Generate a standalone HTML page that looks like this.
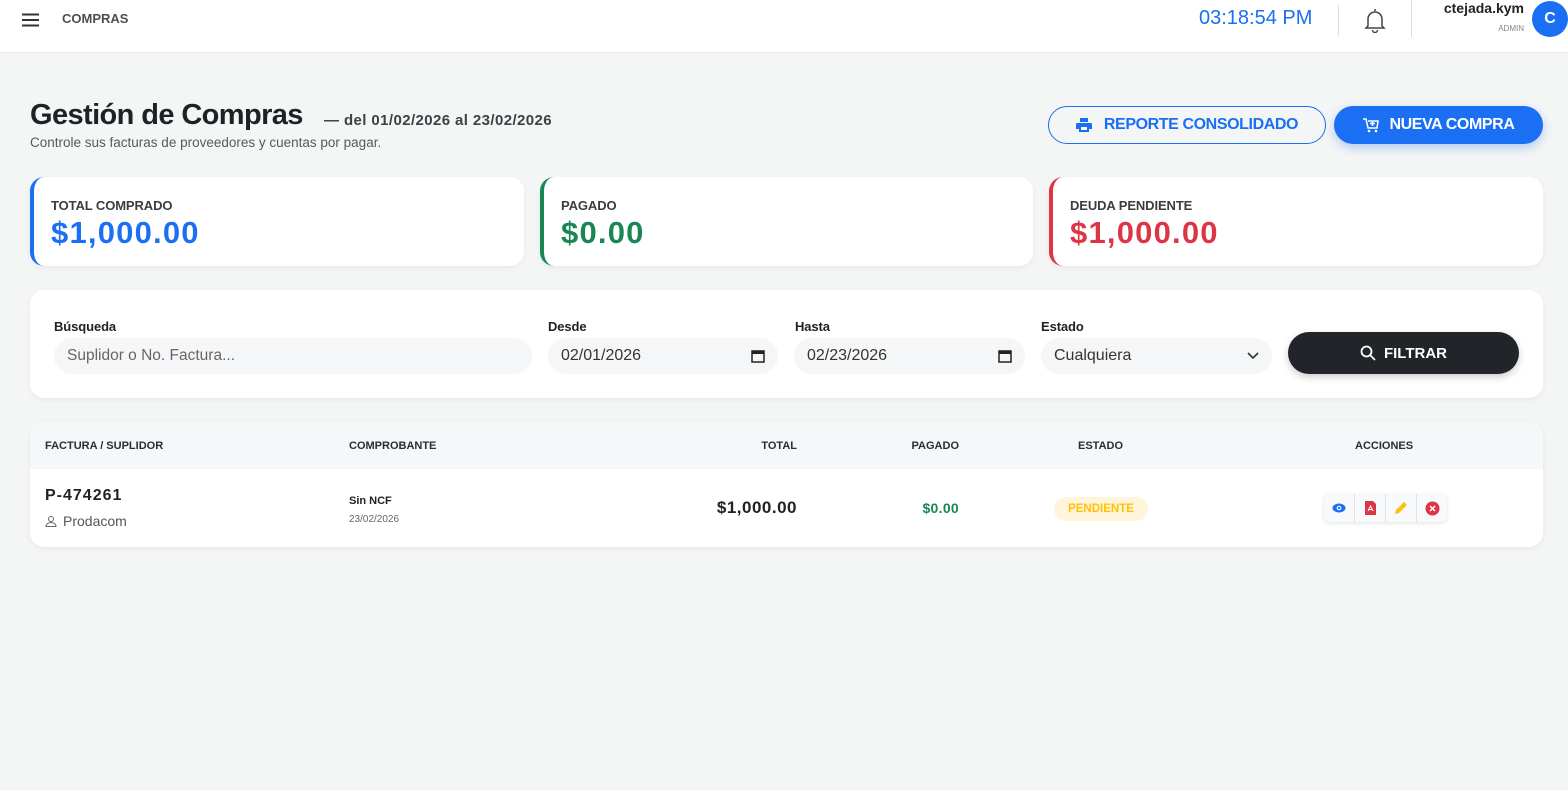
<!DOCTYPE html>
<html><head><meta charset="utf-8"><style>
*{box-sizing:border-box;margin:0;padding:0}
body{width:1568px;height:790px;background:#f4f5f5;font-family:"Liberation Sans",sans-serif;position:relative;overflow:hidden;color:#212529}
.abs{position:absolute}
.hdr{left:0;top:0;width:1568px;height:53px;background:#fff;border-bottom:1px solid #e8e9eb}
.card{background:#fff;border-radius:14px;box-shadow:0 2px 6px rgba(0,0,0,.05)}
.lbl{font-size:13px;font-weight:bold;color:#3a3d42;letter-spacing:-.1px}
.inp{background:#f5f6f8;border-radius:18px;height:36px;font-size:16px;color:#333;padding:0 13px;display:flex;align-items:center}
.th{font-size:11px;font-weight:bold;color:#2a2d31;top:440px;letter-spacing:0}
.val{font-size:31px;font-weight:bold;letter-spacing:1.2px;top:215px}
</style></head><body>
<div class="abs hdr"></div>
<svg class="abs" style="left:22px;top:13px" width="17" height="14"><path d="M0 1.5h17M0 7h17M0 12.5h17" stroke="#333" stroke-width="2"/></svg>
<div class="abs" style="left:62px;top:11px;font-size:13px;font-weight:bold;color:#4b4f55">COMPRAS</div>
<div class="abs" style="left:1199px;top:7px;font-size:20px;color:#1a6ff2">03:18:54 PM</div>
<div class="abs" style="left:1338px;top:5px;width:1px;height:31px;background:#ddd"></div>
<svg class="abs" style="left:1364px;top:7px" width="22" height="26" viewBox="0 0 22 26"><path d="M11 2v2M4 19V12a7 7 0 0 1 14 0v7l2 2H2z M8.5 23a2.5 2.5 0 0 0 5 0" fill="none" stroke="#444" stroke-width="1.5"/></svg>
<div class="abs" style="left:1411px;top:0;width:1px;height:37px;background:#ddd"></div>
<div class="abs" style="right:44px;top:0px;font-size:14px;font-weight:bold;color:#222">ctejada.kym</div>
<div class="abs" style="right:44px;top:24px;font-size:8px;color:#888">ADMIN</div>
<div class="abs" style="left:1532px;top:1px;width:36px;height:36px;border-radius:50%;background:#1a6ff2;color:#fff;font-weight:bold;font-size:16px;display:flex;align-items:center;justify-content:center">C</div>

<div class="abs" style="left:30px;top:99px;font-size:29px;font-weight:bold;color:#1e2125;letter-spacing:-.6px">Gestión de Compras</div>
<div class="abs" style="left:324px;top:112px;font-size:15px;font-weight:bold;color:#3e4247;letter-spacing:.4px">— del 01/02/2026 al 23/02/2026</div>
<div class="abs" style="left:30px;top:135px;font-size:13.5px;color:#555a60">Controle sus facturas de proveedores y cuentas por pagar.</div>

<div class="abs" style="left:1048px;top:106px;width:278px;height:38px;border:1.5px solid #1a6ff2;border-radius:19px;display:flex;align-items:center;justify-content:center;color:#1a6ff2;font-weight:bold;font-size:16px;letter-spacing:-.4px">
<svg width="16" height="14" viewBox="0 0 16 14" style="margin-right:12px"><path d="M4 0h8v4H4z M1 5h14a1 1 0 0 1 1 1v5h-3v3H3v-3H0V6a1 1 0 0 1 1-1z" fill="#1a6ff2"/><rect x="5" y="9" width="6" height="3" fill="#fff"/></svg>REPORTE CONSOLIDADO</div>
<div class="abs" style="left:1334px;top:106px;width:209px;height:38px;background:#1a6ff2;border-radius:19px;display:flex;align-items:center;justify-content:center;color:#fff;font-weight:bold;font-size:16px;letter-spacing:-.4px;box-shadow:0 4px 10px rgba(26,111,242,.3)">
<svg width="16" height="16" viewBox="0 0 16 16" style="margin-right:11px"><path d="M0 2h3l2 9h9l1-7H5M7 6.5h5M9.5 4v5" fill="none" stroke="#fff" stroke-width="1.5"/><circle cx="6" cy="14" r="1.3" fill="#fff"/><circle cx="13" cy="14" r="1.3" fill="#fff"/></svg>NUEVA COMPRA</div>

<div class="abs card" style="left:30px;top:177px;width:494px;height:89px;border-left:4px solid #1a6ff2"></div>
<div class="abs card" style="left:540px;top:177px;width:493px;height:89px;border-left:4px solid #198754"></div>
<div class="abs card" style="left:1049px;top:177px;width:494px;height:89px;border-left:4px solid #dc3545"></div>
<div class="abs lbl" style="left:51px;top:198px">TOTAL COMPRADO</div>
<div class="abs val" style="left:51px;color:#1a6ff2">$1,000.00</div>
<div class="abs lbl" style="left:561px;top:198px">PAGADO</div>
<div class="abs val" style="left:561px;color:#198754">$0.00</div>
<div class="abs lbl" style="left:1070px;top:198px">DEUDA PENDIENTE</div>
<div class="abs val" style="left:1070px;color:#dc3545">$1,000.00</div>

<div class="abs card" style="left:30px;top:290px;width:1513px;height:108px"></div>
<div class="abs lbl" style="left:54px;top:319px;color:#222">Búsqueda</div>
<div class="abs lbl" style="left:548px;top:319px;color:#222">Desde</div>
<div class="abs lbl" style="left:795px;top:319px;color:#222">Hasta</div>
<div class="abs lbl" style="left:1041px;top:319px;color:#222">Estado</div>
<div class="abs inp" style="left:54px;top:338px;width:478px;color:#666;font-size:15.5px">Suplidor o No. Factura...</div>
<div class="abs inp" style="left:548px;top:338px;width:230px;justify-content:space-between">02/01/2026<svg width="14" height="14"><rect x="1" y="2" width="12" height="11" fill="none" stroke="#222" stroke-width="1.5"/><rect x="1" y="2" width="12" height="3" fill="#222"/></svg></div>
<div class="abs inp" style="left:794px;top:338px;width:231px;justify-content:space-between">02/23/2026<svg width="14" height="14"><rect x="1" y="2" width="12" height="11" fill="none" stroke="#222" stroke-width="1.5"/><rect x="1" y="2" width="12" height="3" fill="#222"/></svg></div>
<div class="abs inp" style="left:1041px;top:338px;width:231px;justify-content:space-between">Cualquiera<svg width="12" height="8"><path d="M1 1l5 5 5-5" fill="none" stroke="#333" stroke-width="1.6"/></svg></div>
<div class="abs" style="left:1288px;top:332px;width:231px;height:42px;background:#212529;border-radius:21px;color:#fff;font-weight:bold;font-size:15px;display:flex;align-items:center;justify-content:center;box-shadow:0 3px 8px rgba(0,0,0,.2)">
<svg width="16" height="16" style="margin-right:8px"><circle cx="6.5" cy="6.5" r="5" fill="none" stroke="#fff" stroke-width="1.8"/><path d="M10 10l5 5" stroke="#fff" stroke-width="1.8"/></svg>FILTRAR</div>

<div class="abs card" style="left:30px;top:422px;width:1513px;height:125px;overflow:hidden"><div style="height:47px;background:#f6f7f9"></div></div>
<div class="abs th" style="left:45px">FACTURA / SUPLIDOR</div>
<div class="abs th" style="left:349px">COMPROBANTE</div>
<div class="abs th" style="right:771px">TOTAL</div>
<div class="abs th" style="right:609px">PAGADO</div>
<div class="abs th" style="left:1078px">ESTADO</div>
<div class="abs th" style="left:1355px">ACCIONES</div>
<div class="abs" style="left:45px;top:487px;font-size:16px;font-weight:bold;color:#222;letter-spacing:1px">P-474261</div>
<div class="abs" style="left:45px;top:513px;font-size:14px;color:#555;display:flex;align-items:center"><svg width="12" height="12" style="margin-right:6px"><circle cx="6" cy="4" r="2.5" fill="none" stroke="#666"/><path d="M1 11.5a5 4 0 0 1 10 0z" fill="none" stroke="#666"/></svg>Prodacom</div>
<div class="abs" style="left:349px;top:495px;font-size:11px;font-weight:bold;color:#222">Sin NCF</div>
<div class="abs" style="left:349px;top:514px;font-size:10px;color:#666">23/02/2026</div>
<div class="abs" style="right:771px;top:498px;font-size:17px;font-weight:bold;color:#222;letter-spacing:.5px">$1,000.00</div>
<div class="abs" style="right:609px;top:500px;font-size:14px;font-weight:bold;color:#198754;letter-spacing:.3px">$0.00</div>
<div class="abs" style="left:1054px;top:497px;width:94px;height:24px;border-radius:12px;background:#fff5da;color:#ffc107;font-size:11.5px;font-weight:bold;display:flex;align-items:center;justify-content:center">PENDIENTE</div>
<div class="abs" style="left:1324px;top:494px;width:123px;height:28px;border-radius:6px;background:#f8f9fa;box-shadow:0 1px 4px rgba(0,0,0,.12);display:flex">
<div style="flex:1;display:flex;align-items:center;justify-content:center;border-right:1px solid #e0e2e5"><svg width="14" height="10"><ellipse cx="7" cy="5" rx="6.5" ry="4.5" fill="#1a6ff2"/><circle cx="7" cy="5" r="2.3" fill="#fff"/><circle cx="7" cy="5" r="1.2" fill="#1a6ff2"/></svg></div>
<div style="flex:1;display:flex;align-items:center;justify-content:center;border-right:1px solid #e0e2e5"><svg width="11" height="14"><path d="M0 0h8l3 3v11H0z" fill="#dc3545"/><path d="M3 10l2.5-5 2.5 5M4 8.5h3" stroke="#fff" fill="none"/></svg></div>
<div style="flex:1;display:flex;align-items:center;justify-content:center;border-right:1px solid #e0e2e5"><svg width="14" height="14"><path d="M1 13l1-4 8-8 3 3-8 8z" fill="#ffc107"/></svg></div>
<div style="flex:1;display:flex;align-items:center;justify-content:center"><svg width="15" height="15"><circle cx="7.5" cy="7.5" r="7" fill="#dc3545"/><path d="M5 5l5 5M10 5l-5 5" stroke="#fff" stroke-width="1.5"/></svg></div>
</div>
</body></html>
